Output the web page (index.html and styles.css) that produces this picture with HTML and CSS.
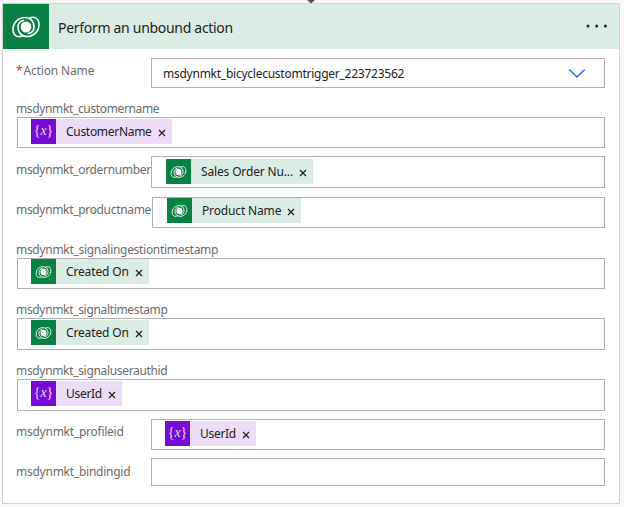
FILE: index.html
```html
<!DOCTYPE html>
<html lang="en">
<head>
<meta charset="utf-8">
<title>Perform an unbound action</title>
<link rel="stylesheet" href="styles.css">
</head>
<body>
<svg width="0" height="0" class="defs" aria-hidden="true">
  <symbol id="dataverse" viewBox="0 0 30 24">
    <g fill="none" stroke="#fff" stroke-linecap="round">
      <path class="ring" d="M11.500 20.500C7 23.500 2 20.500 2 14.500C2 7.500 7.500 2.500 14 2.500C19.500 2.500 23 6.500 23 11.500C23 15.500 20.500 18 17.500 18.500"/>
      <path class="ring" d="M18.500 3.500C23 .5 28 3.500 28 9.500C28 16.500 22.500 21.500 16 21.500C10.500 21.500 7 17.500 7 12.500C7 8.500 9.500 6 12.500 5.500"/>
    </g>
    <ellipse cx="15" cy="12" rx="5.300" ry="5.600" fill="#fff"/>
  </symbol>
</svg>
<svg class="arrow" width="10" height="4" viewBox="0 0 10 4"><path d="M1 0h8L5 3.500z" fill="#555"/></svg>
<main class="card">
  <header class="header">
    <div class="logo"><svg width="30" height="24"><use href="#dataverse"/></svg></div>
    <h1 class="title">Perform an unbound action</h1>
    <svg class="more" width="22" height="4" viewBox="0 0 22 4"><g fill="#222"><circle cx="2" cy="2" r="1.500"/><circle cx="10.700" cy="2" r="1.500"/><circle cx="19.400" cy="2" r="1.500"/></g></svg>
  </header>
  <div class="field inline action">
    <label class="label"><span class="required">*</span><span class="action-name">Action Name</span></label>
    <div class="box select"><span class="value">msdynmkt_bicyclecustomtrigger_223723562</span>
      <svg width="18" height="11" viewBox="0 0 18 11"><path d="M1.300 1.500L9 9L16.700 1.500" fill="none" stroke="#2168f0" stroke-width="1.500"/></svg></div>
  </div>
  <div class="field stacked customer">
    <label class="label">msdynmkt_customername</label>
    <div class="box"><span class="token variable"><span class="icon">{<i>x</i>}</span><span class="name">CustomerName</span><svg class="close" viewBox="0 0 8 8"><path d="M1 1l6 6M7 1L1 7"/></svg></span></div>
  </div>
  <div class="field inline order">
    <label class="label">msdynmkt_ordernumber</label>
    <div class="box"><span class="token"><span class="icon"><svg width="17" height="14"><use href="#dataverse"/></svg></span><span class="name">Sales Order Nu...</span><svg class="close" viewBox="0 0 8 8"><path d="M1 1l6 6M7 1L1 7"/></svg></span></div>
  </div>
  <div class="field inline product">
    <label class="label">msdynmkt_productname</label>
    <div class="box"><span class="token"><span class="icon"><svg width="17" height="14"><use href="#dataverse"/></svg></span><span class="name">Product Name</span><svg class="close" viewBox="0 0 8 8"><path d="M1 1l6 6M7 1L1 7"/></svg></span></div>
  </div>
  <div class="field stacked ingestion">
    <label class="label">msdynmkt_signalingestiontimestamp</label>
    <div class="box"><span class="token"><span class="icon"><svg width="17" height="14"><use href="#dataverse"/></svg></span><span class="name">Created On</span><svg class="close" viewBox="0 0 8 8"><path d="M1 1l6 6M7 1L1 7"/></svg></span></div>
  </div>
  <div class="field stacked timestamp">
    <label class="label">msdynmkt_signaltimestamp</label>
    <div class="box"><span class="token"><span class="icon"><svg width="17" height="14"><use href="#dataverse"/></svg></span><span class="name">Created On</span><svg class="close" viewBox="0 0 8 8"><path d="M1 1l6 6M7 1L1 7"/></svg></span></div>
  </div>
  <div class="field stacked auth">
    <label class="label">msdynmkt_signaluserauthid</label>
    <div class="box"><span class="token variable"><span class="icon">{<i>x</i>}</span><span class="name">UserId</span><svg class="close" viewBox="0 0 8 8"><path d="M1 1l6 6M7 1L1 7"/></svg></span></div>
  </div>
  <div class="field inline profile">
    <label class="label">msdynmkt_profileid</label>
    <div class="box"><span class="token variable"><span class="icon">{<i>x</i>}</span><span class="name">UserId</span><svg class="close" viewBox="0 0 8 8"><path d="M1 1l6 6M7 1L1 7"/></svg></span></div>
  </div>
  <div class="field inline binding">
    <label class="label">msdynmkt_bindingid</label>
    <div class="box"></div>
  </div>
</main>
</body>
</html>
```
FILE: styles.css
```css
* { box-sizing: border-box; }
body {
  margin: 0;
  height: 507px;
  padding: 3px 4px 3px 2px;
  background: #f8f8f8;
  font-family: "Noto Sans", "Open Sans", sans-serif;
  font-size: 12px;
  overflow: hidden;
}
.defs { position: absolute; }
.ring { stroke-width: 1.6; }
.arrow { position: absolute; left: 306px; top: 0; }
.card {
  height: 501px;
  border: 1px solid #d2d2d2;
  background: #fff;
}
.header {
  display: flex;
  align-items: center;
  height: 45px;
  padding-right: 11px;
  background: #dbece4;
}
.logo {
  display: flex;
  align-items: center;
  justify-content: center;
  width: 46px;
  height: 45px;
  background: #088142;
}
.title {
  flex: 1;
  margin: 2px 0 0 9px;
  font-size: 14px;
  font-weight: 400;
  line-height: 20px;
  letter-spacing: -0.3px;
  color: #222;
  white-space: nowrap;
}
.more { margin-top: -1px; }
.field { display: flex; margin-right: 14px; margin-left: 13px; }
.label {
  color: #6b6b6b;
  white-space: nowrap;
  line-height: 16px;
  letter-spacing: -0.33px;
}
.inline .label { width: 136px; flex: none; padding-top: 6px; }
.box {
  flex: 1;
  min-width: 0;
  height: 31px;
  padding: 0 13px;
  border: 1px solid #b1b1b1;
  background: #fff;
}
.inline .box { margin-left: -1px; padding-left: 14px; }
.stacked { flex-direction: column; }
.stacked .label { height: 18px; padding-top: 2px; }
.stacked .box { flex: none; margin-left: 1px; }

.action { margin-top: 9px; }
.inline.action .label { padding-top: 5px; letter-spacing: -0.15px; }
.action .box { height: 30px; }
.required { color: #e03030; margin-right: 1px; }
.inline .select {
  display: flex;
  align-items: center;
  justify-content: space-between;
  padding: 0 18px 0 11px;
}
.value { color: #222; letter-spacing: -0.25px; }
.customer { margin-top: 11px; }
.customer .box { padding-top: 1px; }
.customer .label { letter-spacing: -0.36px; }
.order { margin-top: 8px; }
.order .box { height: 32px; padding-top: 2px; }
.product { margin-top: 9px; }
.inline.product .label { width: 137px; padding-top: 5px; }
.ingestion { margin-top: 12px; }
.ingestion .label { letter-spacing: -0.3px; }
.timestamp { margin-top: 11px; }
.timestamp .box { height: 32px; padding-top: 1px; }
.auth { margin-top: 11px; }
.auth .box { height: 32px; padding-top: 1px; }
.profile { margin-top: 8px; }
.inline.profile .label { padding-top: 5px; letter-spacing: -0.25px; }
.inline.profile .box { padding-left: 13px; padding-top: 1px; }
.binding { margin-top: 8px; }
.binding .label { letter-spacing: -0.25px; }
.binding .box { height: 28px; }

.token {
  display: inline-flex;
  vertical-align: top;
  align-items: center;
  height: 25px;
  padding-right: 6px;
  background: #dbece4;
  color: #222;
}
.icon {
  display: flex;
  align-items: center;
  justify-content: center;
  width: 25px;
  height: 25px;
  background: #088142;
}
.variable { background: #ecdcf8; }
.variable .icon {
  padding-bottom: 2px;
  background: #770bd6;
  color: #ead8fa;
  font: 14px "Liberation Serif", serif;
}
.name { margin-left: 10px; white-space: nowrap; letter-spacing: -0.15px; }
.variable .name { letter-spacing: -0.3px; }
.close {
  width: 8px;
  height: 8px;
  margin: 2px 0 0 6px;
  stroke: #222;
  stroke-width: 1.3;
}
```
